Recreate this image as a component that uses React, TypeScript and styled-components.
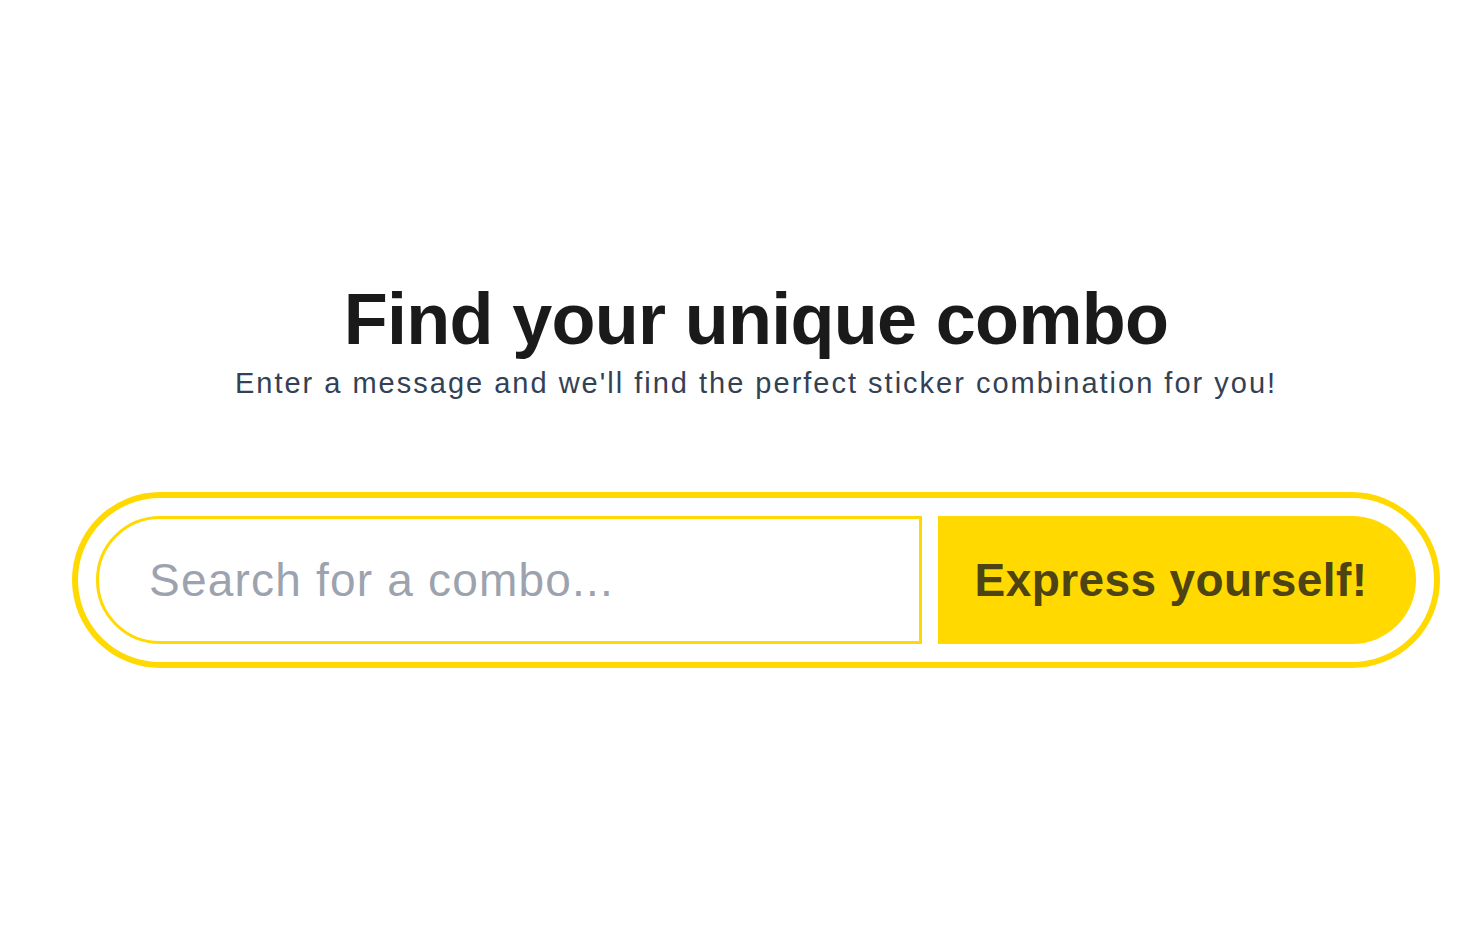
import React, { useState } from 'react';
import styled, { createGlobalStyle } from 'styled-components';

const GlobalStyle = createGlobalStyle`
    html, body {
        margin: 0;
        padding: 0;
        background: #ffffff;
    }
    body {
        font-family: 'Liberation Sans', Arial, sans-serif;
    }
`;

const yellow = '#ffd900';

const Page = styled.main`
    min-height: 100vh;
    box-sizing: border-box;
    padding: 283px 38px 0 72px;
    display: flex;
    flex-direction: column;
    align-items: center;
`;

const Title = styled.h1`
    margin: 0;
    font-size: 72px;
    line-height: 72px;
    font-weight: 700;
    color: #1a1a1a;
    letter-spacing: -0.7px;
    text-align: center;
`;

const Subtitle = styled.p`
    margin: 10px 0 0;
    font-size: 29px;
    line-height: 36px;
    letter-spacing: 2px;
    color: #334155;
    text-align: center;
`;

const SearchForm = styled.form`
    margin-top: 91px;
    width: 100%;
    box-sizing: border-box;
    height: 176px;
    padding: 18px;
    border: 6px solid ${yellow};
    border-radius: 88px;
    display: flex;
    gap: 16px;
`;

const SearchInput = styled.input`
    flex: 1;
    min-width: 0;
    height: 128px;
    box-sizing: border-box;
    border: 3px solid ${yellow};
    border-radius: 64px 0 0 64px;
    padding: 0 24px 0 50px;
    font-family: 'Liberation Sans', Arial, sans-serif;
    font-size: 46px;
    letter-spacing: 1.2px;
    color: #1a1a1a;
    outline: none;
    background: #ffffff;

    &::placeholder {
        color: #9ca3af;
    }
`;

const SubmitButton = styled.button`
    width: 478px;
    height: 128px;
    box-sizing: border-box;
    border: none;
    border-radius: 0 64px 64px 0;
    background: ${yellow};
    color: #4d4313;
    font-family: 'Liberation Sans', Arial, sans-serif;
    font-size: 46px;
    font-weight: 700;
    letter-spacing: 0.4px;
    padding: 0 12px 0 0;
    cursor: pointer;
`;

const App = () => {
    const [query, setQuery] = useState('');

    return (
        <>
            <GlobalStyle />
            <Page>
                <Title>Find your unique combo</Title>
                <Subtitle>Enter a message and we'll find the perfect sticker combination for you!</Subtitle>
                <SearchForm onSubmit={(e) => e.preventDefault()}>
                    <SearchInput
                        value={query}
                        onChange={(e) => setQuery(e.target.value)}
                        placeholder='Search for a combo...'
                    />
                    <SubmitButton type='submit'>Express yourself!</SubmitButton>
                </SearchForm>
            </Page>
        </>
    );
};

export default App;
